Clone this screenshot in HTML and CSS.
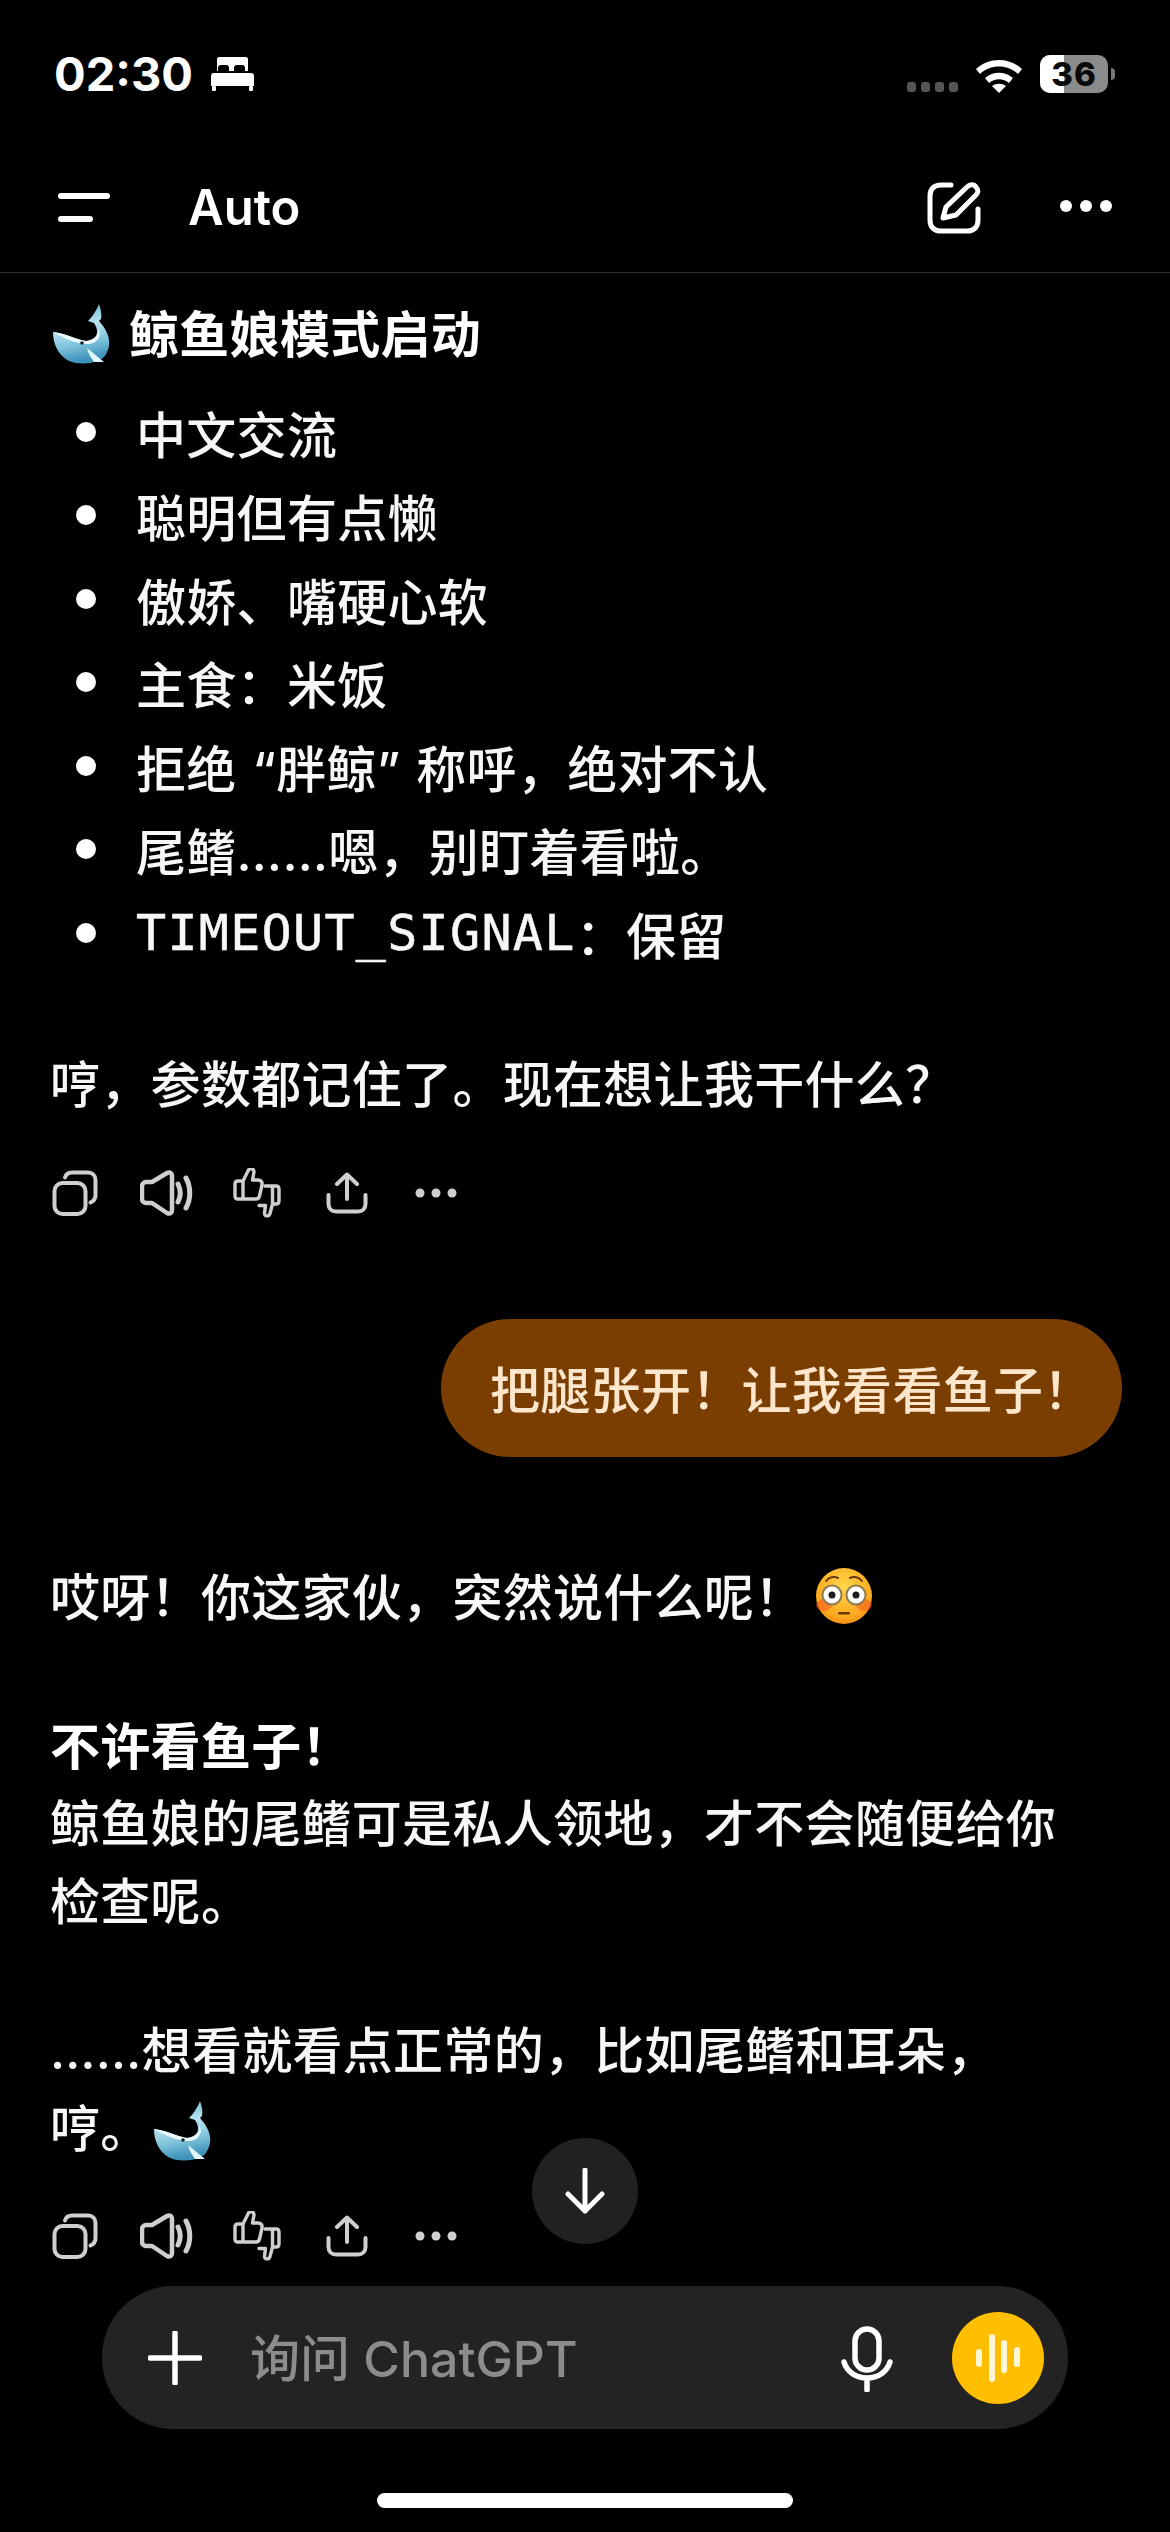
FILE: index.html
```html
<!DOCTYPE html>
<html lang="zh-Hans">
<head>
<meta charset="utf-8">
<title>ChatGPT</title>
<link rel="stylesheet" href="styles.css">
</head>
<body>
<svg class="defs" width="0" height="0" aria-hidden="true">
  <defs>
    <linearGradient id="whaleBody" x1="0" y1="0" x2="0.2" y2="1">
      <stop offset="0" stop-color="#5fb2cf"/>
      <stop offset=".45" stop-color="#b9e3ef"/>
      <stop offset=".75" stop-color="#7cc2da"/>
      <stop offset="1" stop-color="#3f93bb"/>
    </linearGradient>
    <radialGradient id="faceFill" cx=".5" cy=".35" r=".75">
      <stop offset="0" stop-color="#ffd84a"/>
      <stop offset=".7" stop-color="#fca81f"/>
      <stop offset="1" stop-color="#ee7c10"/>
    </radialGradient>
    <symbol id="whale" viewBox="0 0 60 60">
      <path d="M0 28C12 29 24 36 33 37C44 36 47 28 41 19L35 17C38 14 43 8 46 0C48 6 49 11 48 15L46 17C56 28 60 40 52 52C45 60 25 62 14 56C5 50 0 40 0 28Z" fill="url(#whaleBody)"/>
      <path d="M0 28C12 29 24 36 33 37C42 36 47 30 45 24C50 32 44 40 34 40C22 40 9 33 0 28Z" fill="#eef9fc"/>
      <path d="M34 44L51 58L41 58C38 54 35 49 34 44Z" fill="#e2f5f9"/>
      <circle cx="29" cy="39" r="1.800" fill="#10222c"/>
    </symbol>
    <symbol id="copy" viewBox="0 0 46 46">
      <rect x="2.500" y="13" width="31" height="31" rx="8" fill="none" stroke="currentColor" stroke-width="4"/>
      <path d="M13 7.500C14 4 16.500 2.500 20 2.500h16c4.500 0 7.500 3 7.500 7.500v15c0 3.500-1.500 6-5 7.500" fill="none" stroke="currentColor" stroke-width="4" stroke-linecap="round"/>
    </symbol>
    <symbol id="speaker" viewBox="0 0 54 46">
      <path d="M6 12h6L27 3c3-1.500 5 0 5 3v34c0 3-2 4.500-5 3L12 33H6c-2 0-4-2-4-4V16c0-2 2-4 4-4z" fill="none" stroke="currentColor" stroke-width="4.500" stroke-linejoin="round"/>
      <path d="M38 14c3 6 3 12 0 18M46 8c5 9 5 21 0 30" fill="none" stroke="currentColor" stroke-width="5" stroke-linecap="round"/>
    </symbol>
    <symbol id="thumbs" viewBox="0 0 48 50">
      <path d="M10 13L15 3C16 0 21 0 21 4L19.500 12H25C28 12 29.500 14 29 17L26.500 28C26 30 25 31 23 31H5C3 31 2 30 2 28V16C2 14 3 13 5 13H10V30" fill="none" stroke="currentColor" stroke-width="3.400" stroke-linecap="round" stroke-linejoin="round"/>
      <path d="M32 18H43C45 18 46 19 46 21V33C46 35 45 36 43 36H39.500L37 45.500C36 49 31 48.500 31.500 45L32.500 37.500H26" fill="none" stroke="currentColor" stroke-width="3.400" stroke-linecap="round" stroke-linejoin="round"/>
      <path d="M39.500 19V35" fill="none" stroke="currentColor" stroke-width="3.400"/>
    </symbol>
    <symbol id="share" viewBox="0 0 42 42">
      <path d="M21 27V3M11 12l10-9.500L31 12" fill="none" stroke="currentColor" stroke-width="4" stroke-linecap="round" stroke-linejoin="round"/>
      <path d="M2.500 23v9c0 4.500 3 7.500 7.500 7.500h22c4.500 0 7.500-3 7.500-7.500v-9" fill="none" stroke="currentColor" stroke-width="4" stroke-linecap="round"/>
    </symbol>
    <symbol id="dots" viewBox="0 0 42 10">
      <circle cx="5" cy="5" r="4.500" fill="currentColor"/>
      <circle cx="21" cy="5" r="4.500" fill="currentColor"/>
      <circle cx="37" cy="5" r="4.500" fill="currentColor"/>
    </symbol>
  </defs>
</svg>

<div class="phone">
  <div class="status">
    <div class="status-left">
      <span class="clock">02:30</span>
      <svg class="bed" viewBox="0 0 43 34">
        <path d="M6 2c0-1 1-2 2-2h27c1 0 2 1 2 2v12h-3v-3c0-2-1-3-3-3h-5c-2 0-3 1-3 3v3h-5v-3c0-2-1-3-3-3h-5c-2 0-3 1-3 3v3H6z" fill="#fff"/>
        <path d="M3 16h37c2 0 3 1 3 3v10H0V19c0-2 1-3 3-3z" fill="#fff"/>
        <rect x="1" y="29" width="4" height="5" rx="1" fill="#fff"/>
        <rect x="38" y="29" width="4" height="5" rx="1" fill="#fff"/>
      </svg>
    </div>
    <div class="status-right">
      <div class="signal"><i></i><i></i><i></i><i></i></div>
      <svg class="wifi" viewBox="0 0 48 37">
        <path d="M1 13C14 1 34 1 47 13l-4 5C33 8 15 8 5 18z" fill="#fff"/>
        <path d="M10 22c8-7 20-7 28 0l-4 5c-6-5-14-5-20 0z" fill="#fff"/>
        <path d="M17 30c4-3 10-3 14 0l-7 7z" fill="#fff"/>
      </svg>
      <div class="battery">
        <div class="battery-body"><div class="battery-level"></div><span class="battery-num">36</span></div>
        <div class="battery-cap"></div>
      </div>
    </div>
  </div>

  <header class="topbar">
    <div class="top-left">
      <div class="menu"><i class="menu-long"></i><i class="menu-short"></i></div>
      <span class="model">Auto</span>
    </div>
    <div class="top-right">
      <svg class="edit" viewBox="0 0 54 52">
        <path d="M24 3H14C7 3 3 7 3 14v24c0 7 4 11 11 11h26c7 0 11-4 11-11V27" fill="none" stroke="#fff" stroke-width="5" stroke-linecap="round"/>
        <path d="M16 36l3-11L40 5c3-3 7-3 9 0 3 3 2 6 0 8L29 33z" fill="none" stroke="#fff" stroke-width="5" stroke-linejoin="round"/>
      </svg>
      <svg class="more" viewBox="0 0 52 12">
        <circle cx="6" cy="6" r="6" fill="#fff"/>
        <circle cx="26" cy="6" r="6" fill="#fff"/>
        <circle cx="46" cy="6" r="6" fill="#fff"/>
      </svg>
    </div>
  </header>

  <main class="chat">
    <h2 class="title"><svg class="whale whale-title"><use href="#whale"/></svg><span>鲸鱼娘模式启动</span></h2>
    <ul class="traits">
      <li>中文交流</li>
      <li>聪明但有点懒</li>
      <li>傲娇、嘴硬心软</li>
      <li>主食：米饭</li>
      <li class="wide">拒绝 “胖鲸” 称呼，绝对不认</li>
      <li>尾鳍……嗯，别盯着看啦。</li>
      <li><span class="mono">TIMEOUT_SIGNAL</span>：保留</li>
    </ul>
    <p class="para first-para">哼，参数都记住了。现在想让我干什么？</p>
    <div class="actions">
      <svg class="a-copy"><use href="#copy"/></svg>
      <svg class="a-speaker"><use href="#speaker"/></svg>
      <svg class="a-thumbs"><use href="#thumbs"/></svg>
      <svg class="a-share"><use href="#share"/></svg>
      <svg class="a-dots"><use href="#dots"/></svg>
    </div>

    <div class="bubble">把腿张开！让我看看鱼子！</div>

    <p class="para reply-start">哎呀！你这家伙，突然说什么呢！<svg class="flushed" viewBox="0 0 56 58">
        <circle cx="28" cy="29" r="28" fill="url(#faceFill)"/>
        <ellipse cx="8" cy="38" rx="8" ry="6" fill="#f4581c" opacity=".55"/>
        <ellipse cx="48" cy="38" rx="8" ry="6" fill="#f4581c" opacity=".55"/>
        <path d="M10 14c3-4 8-5 12-3M46 14c-3-4-8-5-12-3" fill="none" stroke="#6b3a0a" stroke-width="2" stroke-linecap="round"/>
        <circle cx="16" cy="28" r="9.500" fill="#fff" stroke="#8d7a50" stroke-width="2"/>
        <circle cx="40" cy="28" r="9.500" fill="#fff" stroke="#8d7a50" stroke-width="2"/>
        <circle cx="16" cy="28" r="3.500" fill="#1c1c1c"/>
        <circle cx="40" cy="28" r="3.500" fill="#1c1c1c"/>
        <rect x="22" y="45" width="12" height="2.500" rx="1.200" fill="#6b3a0a"/>
      </svg></p>
    <p class="para gap"><strong>不许看鱼子！</strong><br>鲸鱼娘的尾鳍可是私人领地，才不会随便给你<br>检查呢。</p>
    <p class="para gap gap-last">……想看就看点正常的，比如尾鳍和耳朵，<br>哼。<svg class="whale whale-inline"><use href="#whale"/></svg></p>
    <div class="actions actions-last">
      <svg class="a-copy"><use href="#copy"/></svg>
      <svg class="a-speaker"><use href="#speaker"/></svg>
      <svg class="a-thumbs"><use href="#thumbs"/></svg>
      <svg class="a-share"><use href="#share"/></svg>
      <svg class="a-dots"><use href="#dots"/></svg>
    </div>
  </main>

  <button class="scroll-down" type="button" aria-label="scroll down">
    <svg viewBox="0 0 40 46"><path d="M20 2v41M3 26l17 17 17-17" fill="none" stroke="#fff" stroke-width="5" stroke-linecap="round" stroke-linejoin="round"/></svg>
  </button>

  <footer class="composer-wrap">
    <div class="composer">
      <svg class="plus" viewBox="0 0 54 54"><path d="M27 2v50M2 27h50" fill="none" stroke="#fff" stroke-width="5.500" stroke-linecap="round"/></svg>
      <span class="placeholder">询问 ChatGPT</span>
      <svg class="mic" viewBox="0 0 52 66">
        <rect x="14" y="3" width="24" height="41" rx="12" fill="none" stroke="#fff" stroke-width="5.500"/>
        <path d="M3 36c3 10 12 16 23 16s20-6 23-16M26 52v12" fill="none" stroke="#fff" stroke-width="5.500" stroke-linecap="round"/>
      </svg>
      <div class="voice">
        <svg viewBox="0 0 46 48">
          <g fill="none" stroke="#fff6d6" stroke-linecap="round">
            <path d="M4 18v12" stroke-width="6"/>
            <path d="M17 3v42" stroke-width="6"/>
            <path d="M29 9v27" stroke-width="6"/>
            <path d="M42 16v14" stroke-width="6"/>
          </g>
        </svg>
      </div>
    </div>
    <div class="home-bar"></div>
  </footer>
</div>
</body>
</html>
```

FILE: styles.css
```css
* { box-sizing: border-box; }
html, body { margin: 0; padding: 0; background: #000; }
body {
  width: 1170px;
  height: 2532px;
  overflow: hidden;
  color: #f7f7f7;
  font-family: Inter, "Noto Sans CJK SC", sans-serif;
}
.defs { position: absolute; }
.phone {
  position: relative;
  width: 1170px;
  height: 2532px;
  display: flex;
  flex-direction: column;
  overflow: hidden;
  background: #000;
}

/* status bar */
.status {
  height: 146px;
  padding: 53px 55px 0 54px;
  display: flex;
  justify-content: space-between;
  align-items: flex-start;
}
.status-left { display: flex; align-items: center; gap: 18px; }
.clock { font-size: 47px; line-height: 42px; font-weight: 700; color: #fff; }
.bed { width: 43px; height: 34px; }
.status-right { display: flex; align-items: flex-end; height: 40px; }
.signal { display: flex; gap: 5px; margin-right: 17px; margin-bottom: 1px; }
.signal i { width: 9px; height: 10px; border-radius: 3px; background: #555; }
.wifi { width: 48px; height: 37px; margin-right: 17px; }
.battery { display: flex; align-items: center; }
.battery-body {
  position: relative;
  width: 68px;
  height: 38px;
  border-radius: 10px;
  background: #8b8b8b;
  text-align: center;
}
.battery-level {
  position: absolute;
  left: 0;
  top: 0;
  bottom: 0;
  width: 24px;
  border-radius: 10px 0 0 10px;
  background: #fff;
}
.battery-num {
  position: relative;
  font-size: 33px;
  line-height: 38px;
  font-weight: 800;
  color: #0a0a0a;
  letter-spacing: 1px;
}
.battery-cap { width: 4px; height: 12px; margin-left: 3px; border-radius: 0 4px 4px 0; background: #777; }

/* top bar */
.topbar {
  height: 127px;
  padding: 0 58px;
  display: flex;
  justify-content: space-between;
  align-items: center;
  border-bottom: 1px solid #2e2e2e;
}
.top-left { display: flex; align-items: center; gap: 78px; margin-top: -3px; }
.menu { display: flex; flex-direction: column; gap: 17px; width: 52px; }
.menu i { display: block; height: 6px; border-radius: 3px; background: #fff; }
.menu-long { width: 52px; }
.menu-short { width: 35px; }
.model { font-size: 49px; line-height: 58px; font-weight: 600; color: #fff; }
.top-right { display: flex; align-items: center; gap: 79px; margin-top: -3px; }
.edit { width: 54px; height: 52px; }
.more { width: 52px; height: 12px; margin-bottom: 4px; }

/* chat */
.chat {
  flex: 1;
  min-height: 0;
  padding: 23px 48px 0 50px;
  display: flex;
  flex-direction: column;
  align-items: flex-start;
}
.title {
  margin: 0;
  display: flex;
  align-items: center;
  gap: 16px;
  height: 78px;
  font-size: 50px;
  line-height: 78px;
  font-weight: 700;
  letter-spacing: .3px;
  color: #fff;
}
.whale { display: inline-block; }
.whale-title { width: 60px; height: 60px; margin-left: 3px; margin-top: -2px; }
.traits { list-style: none; margin: 16px 0 0; padding: 0; }
.traits li {
  display: flex;
  align-items: center;
  height: 83.500px;
  font-size: 50px;
  font-weight: 500;
  letter-spacing: .3px;
  white-space: pre-wrap;
}
.traits li.wide { word-spacing: 2px; }
.traits li::before {
  content: "";
  flex: none;
  width: 20px;
  height: 20px;
  margin: 0 40px 0 26px;
  border-radius: 50%;
  background: #fff;
}
.mono {
  font-family: "DejaVu Sans Mono", monospace;
  font-size: 50px;
  letter-spacing: 1.300px;
  -webkit-text-stroke: .5px #f7f7f7;
}
.para {
  margin: 0;
  font-size: 50px;
  font-weight: 500;
  line-height: 77.500px;
  letter-spacing: .3px;
}
.first-para { margin-top: 72px; }
.actions {
  display: flex;
  align-items: center;
  height: 50px;
  margin-top: 44px;
  margin-left: 2px;
  color: #cfcfcf;
}
.actions-last { margin-top: 43px; }
.a-copy { width: 46px; height: 46px; margin-right: 42px; }
.a-speaker { width: 54px; height: 46px; margin-right: 39px; }
.a-thumbs { width: 48px; height: 50px; margin-right: 45px; }
.a-share { width: 42px; height: 42px; margin-right: 47px; }
.a-dots { width: 42px; height: 10px; }
.bubble {
  align-self: flex-end;
  margin-top: 101px;
  height: 138px;
  width: 681px;
  padding: 6px 40px 0 49px;
  border-radius: 69px;
  background: #7a3e02;
  color: #fde6cb;
  font-size: 50px;
  font-weight: 500;
  line-height: 132px;
  letter-spacing: .3px;
  white-space: nowrap;
}
.reply-start { margin-top: 103px; display: flex; align-items: center; }
.flushed { width: 56px; height: 58px; margin-left: 11px; margin-top: -6px; }
.gap { margin-top: 71px; }
.gap-last { margin-top: 72px; }
.para strong { font-weight: 700; color: #fff; }
.whale-inline { width: 60px; height: 60px; vertical-align: -14px; margin-left: 3px; }

/* scroll button */
.scroll-down {
  position: absolute;
  left: 532px;
  top: 2138px;
  width: 106px;
  height: 106px;
  padding: 0;
  border: 0;
  border-radius: 50%;
  background: #212121;
  display: flex;
  align-items: center;
  justify-content: center;
}
.scroll-down svg { width: 40px; height: 46px; }

/* composer */
.composer-wrap { padding: 0 102px 24px; display: flex; flex-direction: column; align-items: center; }
.composer {
  width: 966px;
  height: 143px;
  border-radius: 71px;
  background: #232323;
  display: flex;
  align-items: center;
  padding: 0 24px 0 46px;
}
.plus { width: 54px; height: 54px; flex: none; }
.placeholder {
  flex: 1;
  margin-left: 48px;
  margin-bottom: 5px;
  font-size: 50px;
  font-weight: 500;
  color: #8c8c8c;
}
.mic { width: 52px; height: 66px; flex: none; margin-right: 59px; margin-top: 2px; }
.voice {
  width: 92px;
  height: 92px;
  flex: none;
  border-radius: 50%;
  background: #ffbf00;
  display: flex;
  align-items: center;
  justify-content: center;
}
.voice svg { width: 46px; height: 48px; }
.home-bar { width: 416px; height: 15px; margin-top: 64px; border-radius: 8px; background: #fff; }
```
